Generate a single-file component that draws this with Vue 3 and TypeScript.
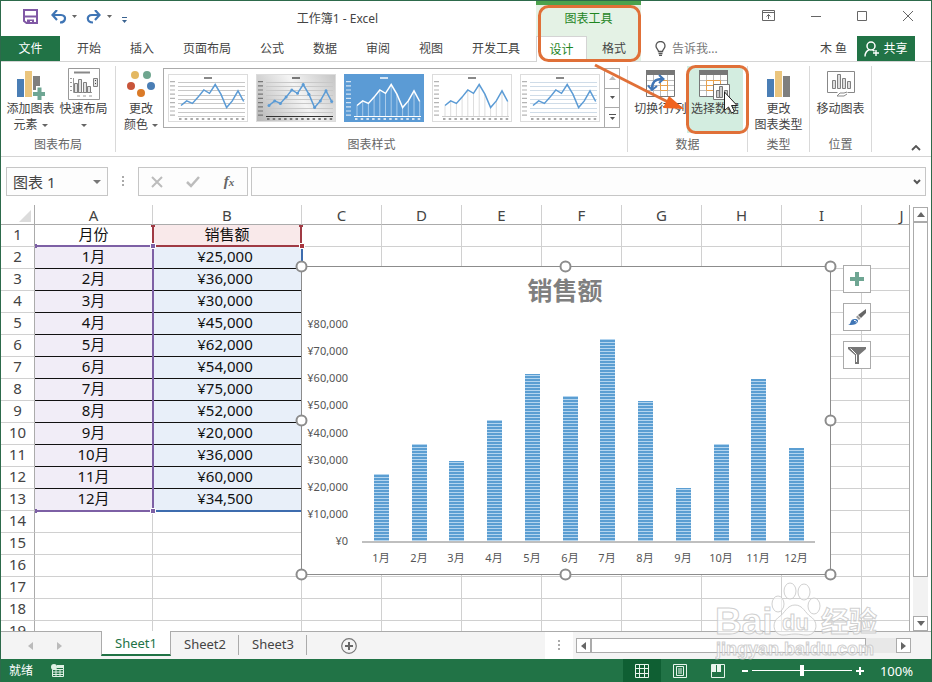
<script setup lang="ts">
import { ref } from 'vue'

interface MonthRow {
  month: string
  sales: number
}

const data: MonthRow[] = [
  25000, 36000, 30000, 45000, 62000, 54000, 75000, 52000, 20000, 36000, 60000, 34500,
].map((sales, i) => ({ month: `${i + 1}月`, sales }))

const money = (n: number): string => '¥' + n.toLocaleString('en-US')

const columns = ['A', 'B', 'C', 'D', 'E', 'F', 'G', 'H', 'I', 'J']
const emptyRows = [14, 15, 16, 17, 18, 19]
const extraColumns = 8

const mainTabs = ['开始', '插入', '页面布局', '公式', '数据', '审阅', '视图', '开发工具']
const sheets = ['Sheet1', 'Sheet2', 'Sheet3']
const activeSheet = ref('Sheet1')
const objectName = ref('图表 1')
const formula = ref('')
const zoomLevel = ref(50)

/* Chart geometry, in the coordinates of the chart's own view box */
const axisY = 276
const perUnit = 217 / 80000
const slot = 453 / 12
const bars = data.map((d, i) => {
  const height = Math.round(d.sales * perUnit)
  return {
    label: d.month,
    x: Math.round(61 + slot * (i + 0.5) - 7),
    cx: Math.round(61 + slot * (i + 0.5)),
    y: axisY - height,
    height,
  }
})
const ticks = Array.from({ length: 9 }, (_, i) => ({
  text: money(i * 10000),
  y: Math.round(axisY + 3 - i * 10000 * perUnit),
}))

/* Gallery thumbnails */
const pointList = data.map((d, i) => ({ x: 13 + i * 5.7, y: 42 - d.sales * 0.00042 }))
const polyline = pointList.map((p) => `${p.x},${p.y}`).join(' ')
const gridYs = [8, 12, 16, 21, 25, 29, 34, 38]
const thumbs = [
  { kind: 'plain', title: '样式 1' },
  { kind: 'silver', title: '样式 2' },
  { kind: 'blue', title: '样式 3' },
  { kind: 'drops', title: '样式 4' },
  { kind: 'light', title: '样式 5' },
]
</script>

<template>
  <div class="window">
    <header class="header">
      <div class="title-row">
        <div class="quick">
          <button aria-label="保存" class="q-save">
            <svg width="15" height="15" viewBox="0 0 15 15"><path d="M1 1h13v13H3.500L1 12z" fill="none" stroke="#8058a5" stroke-width="2" /><path d="M2 7.500h11" stroke="#8058a5" stroke-width="2" /><path d="M4 15v-4.500h7V15H9v-3H7v3z" fill="#8058a5" /></svg>
          </button>
          <button aria-label="撤消" class="q-undo">
            <svg width="28" height="14" viewBox="0 0 28 14"><path d="M2 5h8c6 0 5 7.500-1 7.500" fill="none" stroke="#3f75b5" stroke-width="2.200" /><path d="M6 0L1.500 5L6 10" fill="none" stroke="#3f75b5" stroke-width="2.200" /><path d="M21 5h5l-2.500 3z" fill="#666" /></svg>
          </button>
          <button aria-label="恢复" class="q-redo">
            <svg width="28" height="14" viewBox="0 0 28 14"><path d="M13 5H6c-6 0-5.500 7.500 1 7.500" fill="none" stroke="#3f75b5" stroke-width="2.200" /><path d="M9 0l4.500 5L9 10" fill="none" stroke="#3f75b5" stroke-width="2.200" /><path d="M21 5h5l-2.500 3z" fill="#666" /></svg>
          </button>
          <button aria-label="自定义快速访问工具栏">
            <svg width="8" height="14" viewBox="0 0 8 14"><path d="M1 7.500h5" stroke="#3a6390" /><path d="M1 10h5l-2.500 3z" fill="#3a6390" /></svg>
          </button>
        </div>
        <h1 class="title">工作簿1 - Excel</h1>
      </div>
      <div class="context-title">图表工具</div>
      <div class="window-buttons">
        <button aria-label="功能区显示选项"><svg width="14" height="12" viewBox="0 0 14 12"><path d="M.5.500h12v10H.500zM.500 2.500h12M6.500 9V4.500M4.500 6.500l2-2 2 2" fill="none" stroke="#666" /></svg></button>
        <button aria-label="最小化"><svg width="12" height="12" viewBox="0 0 12 12"><path d="M1 6.500h10" stroke="#666" /></svg></button>
        <button aria-label="最大化"><svg width="12" height="12" viewBox="0 0 12 12"><path d="M1.500 1.500h9v9h-9z" fill="none" stroke="#666" /></svg></button>
        <button aria-label="关闭"><svg width="12" height="12" viewBox="0 0 12 12"><path d="M1 1l10 10M11 1L1 11" fill="none" stroke="#666" /></svg></button>
      </div>

      <nav class="tabs" aria-label="功能区">
        <button class="file">文件</button>
        <button v-for="t in mainTabs" :key="t" class="tab">{{ t }}</button>
      </nav>
      <div class="context-tabs">
        <button class="ctab current">设计</button>
        <button class="ctab">格式</button>
      </div>
      <div class="account">
        <button class="tell">
          <svg width="11" height="15" viewBox="0 0 11 15"><path d="M3.500 10.500c0-2-2.500-3-2.500-5.500a4.300 4.300 0 0 1 9 0c0 2.500-2.500 3.500-2.500 5.500z" fill="none" stroke="#555" stroke-width="1.300" /><path d="M3.500 12.500h4M4 14.300h3" stroke="#555" stroke-width="1.300" /></svg>
          告诉我...
        </button>
        <span class="user">木 鱼</span>
        <button class="share">
          <svg width="16" height="16" viewBox="0 0 16 16"><circle cx="7" cy="5" r="4" fill="none" stroke="#fff" stroke-width="1.500" /><path d="M1 15.500c0-4 2-6 4.500-7M8.500 9l2 1M12 9v6M9 12h6" fill="none" stroke="#fff" stroke-width="1.400" /></svg>
          共享
        </button>
      </div>
    </header>

    <section class="ribbon">
      <div class="group g-layout">
        <div class="tools">
          <button class="tool">
            <svg width="30" height="32" viewBox="0 0 30 32"><path d="M1 11h7v18H1z" fill="#4a7eb5" /><path d="M9 3h7v26H9z" fill="#eac57e" /><path d="M17 8h7v21h-7z" fill="#7f7f7f" /><path d="M16 22h4v-4h8v4h3v8h-3v4h-8v-4h-4z" fill="#fff" /><path d="M17 24h4.500v-4.500h4V24H29v4h-3.500v4h-4v-4H17z" fill="#6fa693" /></svg>
            <span>添加图表</span><span>元素 <i class="caret"></i></span>
          </button>
          <button class="tool">
            <svg width="32" height="32" viewBox="0 0 32 32"><path d="M.5.500h31v31H.500z" fill="#fff" stroke="#999" /><path d="M6 4.500h16" stroke="#888" stroke-width="2" /><path d="M2 10.500h2m-2 4h2m-2 4h2m-2 4h2M5.500 10v14.500H24M9 28h3m3 0h3m3 0h3" stroke="#999" fill="none" /><path d="M6.500 15.500h3v9h-3zM10.500 11.500h3v13h-3zM15.500 14.500h3v10h-3zM19.500 18.500h3v6h-3zM25.500 10.500h4v8h-4z" fill="#e4e4e4" stroke="#808080" /><path d="M27 12h1v1h-1zM27 15h1v1h-1z" fill="#444" /></svg>
            <span>快速布局</span><span><i class="caret"></i></span>
          </button>
        </div>
        <div class="group-name">图表布局</div>
      </div>

      <div class="group g-style">
        <div class="tools">
          <button class="tool">
            <svg width="30" height="32" viewBox="0 0 30 32"><circle cx="9" cy="7" r="4" fill="#e3b862" /><circle cx="21" cy="7" r="4" fill="#6fa68f" /><circle cx="5" cy="18" r="4" fill="#c8553a" /><circle cx="25" cy="18" r="4" fill="#4a7eb5" /><circle cx="15" cy="25" r="4" fill="#da7a27" /></svg>
            <span>更改</span><span>颜色 <i class="caret"></i></span>
          </button>
          <div class="gallery">
            <button v-for="t in thumbs" :key="t.kind" class="thumb" :class="t.kind" :aria-label="t.title">
              <svg width="80" height="48" viewBox="0 0 80 48">
                <g v-if="t.kind !== 'blue' && t.kind !== 'drops'" class="lines">
                  <path v-for="y in gridYs" :key="y" :d="`M10 ${y}.500H77`" />
                </g>
                <g v-if="t.kind === 'blue' || t.kind === 'drops'" class="stems">
                  <path v-for="p in pointList" :key="p.x" :d="`M${p.x} ${p.y}V42`" />
                </g>
                <path class="base" d="M10 42.500H77" />
                <path class="ticks-y" d="M4.500 7v36" />
                <path class="ticks-x" d="M11 45H77" />
                <path class="head" d="M36 4H44" />
                <polyline :points="polyline" class="series" />
                <g v-if="t.kind === 'silver'" class="dots"><circle v-for="p in pointList" :key="p.x" :cx="p.x" :cy="p.y" r="1.500" /></g>
              </svg>
            </button>
            <div class="gallery-nav">
              <button aria-label="上一行"><svg width="7" height="4" viewBox="0 0 7 4"><path d="M0 4h7L3.500 0z" fill="#bbb" /></svg></button>
              <button aria-label="下一行"><svg width="7" height="4" viewBox="0 0 7 4"><path d="M1 0h5L3.500 3z" fill="#555" /></svg></button>
              <button aria-label="其他"><svg width="7" height="7" viewBox="0 0 7 7"><path d="M0 .5h7" stroke="#555" /><path d="M1 3h5L3.500 6z" fill="#555" /></svg></button>
            </div>
          </div>
        </div>
        <div class="group-name">图表样式</div>
      </div>

      <div class="group g-data">
        <div class="tools">
          <button class="tool">
            <svg width="30" height="32" viewBox="0 0 30 32"><path d="M.5 3.500h28v25H.500z" fill="#fff" stroke="#777" /><path d="M0 2h29v5H0z" fill="#777" /><path d="M7.500 7v21M14.500 7v21M21.500 7v21M1 12.500h27M1 17.500h27M1 22.500h27" stroke="#bbb" fill="none" /><path d="M14.500 12.500h7v10h-7zM14.500 17.500h7" fill="none" stroke="#e8a04c" /><path d="M6 21C6 14 9 11 16 11" stroke="#3f75b5" stroke-width="2.500" fill="none" /><path d="M13 7l4.500 4-4.500 4M2 17.500l4 4.500 5-4" stroke="#3f75b5" stroke-width="2" fill="none" /></svg>
            <span>切换行/列</span>
          </button>
          <button class="tool chosen">
            <svg width="32" height="32" viewBox="0 0 32 32"><path d="M.5 3.500h28v25H.500z" fill="#fff" stroke="#777" /><path d="M0 2h29v5H0z" fill="#777" /><path d="M7.500 7v21M14.500 7v21M21.500 7v21M1 12.500h27M1 17.500h27M1 22.500h27" stroke="#bbb" fill="none" /><path d="M7.500 12.500h14v10h-14zM14.500 12.500v10M7.500 17.500h14" fill="none" stroke="#e8a04c" /><path d="M14.500 16.500h16v15h-16z" fill="#fff" stroke="#777" /><path d="M17.500 22.500h3v7h-3zM20.500 18.500h3v11h-3zM25.500 22.500h3v7h-3z" fill="#ccc" stroke="#777" /></svg>
            <span>选择数据</span>
          </button>
        </div>
        <div class="group-name">数据</div>
      </div>

      <div class="group g-type">
        <div class="tools">
          <button class="tool">
            <svg width="24" height="32" viewBox="0 0 24 32"><path d="M0 11h7v18H0z" fill="#4a7eb5" /><path d="M8 3h7v26H8z" fill="#eac57e" /><path d="M16 8h7v21h-7z" fill="#7f7f7f" /></svg>
            <span>更改</span><span>图表类型</span>
          </button>
        </div>
        <div class="group-name">类型</div>
      </div>

      <div class="group g-place">
        <div class="tools">
          <button class="tool">
            <svg width="28" height="32" viewBox="0 0 28 32"><path d="M10.500 24.500H.500v-21h27v21h-7" fill="none" stroke="#888" /><path d="M5.500 12.500h3v8h-3zM10.500 6.500h3v14h-3zM15.500 10.500h3v10h-3zM20.500 13.500h3v7h-3z" fill="#ddd" stroke="#808080" /><path d="M10 28l3-3h4l3-1M10 28h7l3-2" fill="none" stroke="#888" /></svg>
            <span>移动图表</span>
          </button>
        </div>
        <div class="group-name">位置</div>
      </div>
      <button class="collapse" aria-label="折叠功能区"><svg width="10" height="6" viewBox="0 0 10 6"><path d="M1 5l4-4 4 4" fill="none" stroke="#555" stroke-width="1.800" /></svg></button>
    </section>

    <section class="formula-row">
      <div class="name-box">
        <input v-model="objectName" aria-label="名称框" />
        <button aria-label="名称列表"><svg width="8" height="4" viewBox="0 0 8 4"><path d="M0 0h8L4 4z" fill="#777" /></svg></button>
      </div>
      <svg class="grip" width="2" height="11" viewBox="0 0 2 11"><path d="M0 0h2v2H0zM0 4h2v2H0zM0 8h2v2H0z" fill="#aaa" /></svg>
      <div class="fx-buttons">
        <button aria-label="取消"><svg width="12" height="12" viewBox="0 0 12 12"><path d="M1 1l10 10M11 1L1 11" stroke="#bcbcbc" stroke-width="2" /></svg></button>
        <button aria-label="输入"><svg width="14" height="12" viewBox="0 0 14 12"><path d="M1 6l4 4 8-9" fill="none" stroke="#bcbcbc" stroke-width="2.500" /></svg></button>
        <button class="fx" aria-label="插入函数"><em>f</em><sub>x</sub></button>
      </div>
      <div class="formula">
        <input v-model="formula" aria-label="编辑栏" />
        <button aria-label="展开编辑栏"><svg width="8" height="6" viewBox="0 0 8 6"><path d="M1 1l3 3 3-3" fill="none" stroke="#555" stroke-width="2" /></svg></button>
      </div>
    </section>

    <main class="work">
      <div class="sheet">
        <table>
          <colgroup>
            <col class="c-num" /><col class="c-a" /><col class="c-b" />
            <col v-for="n in extraColumns" :key="n" class="c-rest" />
          </colgroup>
          <thead>
            <tr>
              <th class="corner"><svg width="12" height="12" viewBox="0 0 12 12"><path d="M12 0v12H0z" fill="#dcdcdc" /></svg></th>
              <th v-for="c in columns" :key="c" scope="col">{{ c }}</th>
            </tr>
          </thead>
          <tbody>
            <tr>
              <th scope="row">1</th><td>月份</td><td class="series-name">销售额</td>
              <td v-for="n in extraColumns" :key="n"></td>
            </tr>
            <tr v-for="(d, i) in data" :key="d.month">
              <th scope="row">{{ i + 2 }}</th><td class="month">{{ d.month }}</td><td class="value">{{ money(d.sales) }}</td>
              <td v-for="n in extraColumns" :key="n"></td>
            </tr>
            <tr v-for="r in emptyRows" :key="r">
              <th scope="row">{{ r }}</th>
              <td v-for="n in extraColumns + 2" :key="n"></td>
            </tr>
          </tbody>
        </table>

        <svg class="ranges" width="310" height="320" viewBox="0 0 310 320">
          <g fill="none" stroke-width="2">
            <path d="M34 41H151M34 306H151M152 42V306" stroke="#7d60a5" />
            <path d="M152 306H300M301 42V306" stroke="#3d6cae" />
            <path d="M152 21V41H300V21" stroke="#a03a44" />
          </g>
          <g stroke="#fff">
            <path d="M149.500 38.500h5v5h-5zM149.500 303.500h5v5h-5z" fill="#7d60a5" />
            <path d="M298.500 38.500h5v5h-5z" fill="#a8363f" />
          </g>
          <path d="M150 20h4v2h-4zM298 20h4v2h-4z" fill="#a03a44" />
          <path d="M34 39h2v4h-2zM34 304h2v4h-2z" fill="#7d60a5" />
        </svg>

        <figure class="chart" aria-label="销售额">
          <svg width="530" height="309" viewBox="0 0 530 309">
            <defs>
              <pattern id="stripe" width="3" height="3" patternUnits="userSpaceOnUse">
                <rect width="3" height="3" fill="#5b9ed2" /><rect y="1" width="3" height="1" fill="#b4d5ef" />
              </pattern>
            </defs>
            <path d="M.5.500h529v308H.500z" fill="#fff" stroke="#8c8c8c" />
            <text class="chart-title" x="264" y="34">销售额</text>
            <text v-for="t in ticks" :key="t.text" class="axis-y" x="47" :y="t.y">{{ t.text }}</text>
            <g v-for="b in bars" :key="b.label">
              <rect :x="b.x" :y="b.y" width="15" :height="b.height" fill="url(#stripe)" shape-rendering="crispEdges" />
              <text class="axis-x" :x="b.cx" y="296">{{ b.label }}</text>
            </g>
            <path d="M61 276H514" stroke="#bfbfbf" stroke-width="2" />
            <g fill="#fff" stroke="#8c8c8c" stroke-width="2">
              <circle cx="0.5" cy="0.5" r="5" /><circle cx="264.5" cy="0.5" r="5" /><circle cx="529.5" cy="0.5" r="5" />
              <circle cx="0.5" cy="154.5" r="5" /><circle cx="529.5" cy="154.5" r="5" />
              <circle cx="0.5" cy="308.5" r="5" /><circle cx="264.5" cy="308.5" r="5" /><circle cx="529.5" cy="308.5" r="5" />
            </g>
          </svg>
          <div class="chart-buttons">
            <button aria-label="图表元素"><svg width="14" height="14" viewBox="0 0 14 14"><path d="M5 0h4v5h5v4H9v5H5V9H0V5h5z" fill="#6fa693" /></svg></button>
            <button aria-label="图表样式"><svg width="18" height="18" viewBox="0 0 18 18"><path d="M18 1v4l-5 5-3-3z" fill="#666" /><path d="M9.500 7.500l3 3-1.500 1.500-3-3z" fill="#999" /><path d="M0 17c4-1 1-6 7-6 3 0 4 2 2 4-2 2-5 2-9 2z" fill="#3f75b5" /><path d="M6 12.500c2-.500 3 1 2 2" stroke="#fff" fill="none" /></svg></button>
            <button aria-label="图表筛选器"><svg width="18" height="17" viewBox="0 0 18 17"><path d="M0 0h18v2l-7 6v9H7V8L0 2z" fill="#777" /><path d="M2.500 1.500l6 6V15" stroke="#fff" fill="none" /></svg></button>
          </div>
        </figure>
      </div>
      <div class="vscroll">
        <button aria-label="向上滚动"><svg width="8" height="5" viewBox="0 0 8 5"><path d="M0 5h8L4 0z" fill="#666" /></svg></button>
        <div class="vtrack"><div class="vthumb"></div></div>
        <button aria-label="向下滚动"><svg width="8" height="5" viewBox="0 0 8 5"><path d="M0 0h8L4 5z" fill="#666" /></svg></button>
      </div>
    </main>

    <section class="sheet-bar">
      <div class="sheet-nav">
        <button aria-label="上一个工作表"><svg width="5" height="8" viewBox="0 0 5 8"><path d="M5 0v8L0 4z" fill="#bbb" /></svg></button>
        <button aria-label="下一个工作表"><svg width="5" height="8" viewBox="0 0 5 8"><path d="M0 0v8l5-4z" fill="#bbb" /></svg></button>
      </div>
      <button v-for="s in sheets" :key="s" class="sheet-tab" :class="{ open: s === activeSheet }" @click="activeSheet = s">{{ s }}</button>
      <button class="add" aria-label="新工作表"><svg width="16" height="16" viewBox="0 0 16 16"><circle cx="8" cy="8" r="7.300" fill="none" stroke="#777" stroke-width="1.200" /><path d="M8 4v8M4 8h8" stroke="#666" stroke-width="2" /></svg></button>
      <div class="split"><svg width="2" height="11" viewBox="0 0 2 11"><path d="M0 0h2v2H0zM0 4h2v2H0zM0 8h2v2H0z" fill="#aaa" /></svg></div>
      <div class="hscroll">
        <button aria-label="向左滚动"><svg width="5" height="8" viewBox="0 0 5 8"><path d="M5 0v8L0 4z" fill="#666" /></svg></button>
        <div class="htrack"><div class="hthumb"></div></div>
        <button aria-label="向右滚动"><svg width="5" height="8" viewBox="0 0 5 8"><path d="M0 0v8l5-4z" fill="#666" /></svg></button>
      </div>
    </section>

    <footer class="status">
      <span>就绪</span>
      <button class="macro" aria-label="录制宏"><svg width="14" height="14" viewBox="0 0 14 14"><path d="M1.500 5.500h11v7h-11zM1.500 2.500h11v3M5 5v8M9 5v8M1.500 8h11M1.500 10.500h11" fill="none" stroke="#dff0e5" /><path d="M6 1h7v3H6z" fill="#dff0e5" /><circle cx="3" cy="3" r="3" fill="#dff0e5" /></svg></button>
      <div class="views">
        <button class="on" aria-label="普通"><svg width="14" height="14" viewBox="0 0 14 14"><path d="M.5.500h13v13H.500zM4.500 0v14M9.500 0v14M0 4.500h14M0 9.500h14" fill="none" stroke="#e8f5ec" /></svg></button>
        <button aria-label="页面布局"><svg width="14" height="14" viewBox="0 0 14 14"><path d="M.5.500h13v13H.500zM3.500 2.500h7v9h-7zM5 5h4M5 7h4M5 9h4" fill="none" stroke="#e8f5ec" /></svg></button>
        <button aria-label="分页预览"><svg width="14" height="14" viewBox="0 0 14 14"><path d="M.5.500h13v13H.500z" fill="none" stroke="#e8f5ec" /><path d="M1 1h4v7H1zM6 1h4v7H6z" fill="#e8f5ec" /></svg></button>
      </div>
      <div class="zoom">
        <button aria-label="缩小"><svg width="6" height="6" viewBox="0 0 6 6"><path d="M0 3h6" stroke="#fff" stroke-width="2" /></svg></button>
        <input v-model="zoomLevel" type="range" min="0" max="100" aria-label="显示比例" />
        <button aria-label="放大"><svg width="8" height="8" viewBox="0 0 8 8"><path d="M0 4h8M4 0v8" stroke="#fff" stroke-width="2" /></svg></button>
      </div>
      <span class="percent">100%</span>
    </footer>

    <svg class="callouts" width="760" height="140" viewBox="0 0 760 140" aria-hidden="true">
      <g fill="none" stroke="#e07038" stroke-width="3">
        <rect x="539.500" y="6.500" width="100" height="54" rx="9" />
        <rect x="687.500" y="66.500" width="60" height="66" rx="8" />
        <path d="M595 65L668 102" />
      </g>
      <path d="M684 109l-21-1 6-12z" fill="#f0641e" />
      <path d="M724.500 92v18.500l4-3.500 3 6 3-1.500-3-6h5.500z" fill="#fff" stroke="#222" />
    </svg>

    <svg class="watermark" width="170" height="84" viewBox="0 0 170 84" aria-hidden="true">
      <g fill="#fff" fill-opacity=".6" stroke="#c4c4c4" stroke-opacity=".8">
        <ellipse cx="63" cy="25" rx="6" ry="8" /><ellipse cx="75" cy="12" rx="6" ry="8" />
        <ellipse cx="89" cy="13" rx="6" ry="8" /><ellipse cx="99" cy="27" rx="6" ry="8" />
        <path d="M80 26c8 0 10 8 16 12 8 5 6 18-4 18-5 0-7-1-12-1s-7 1-12 1c-10 0-12-13-4-18 6-4 8-12 16-12z" />
        <text class="wm-big" x="0" y="55">Bai</text>
        <text class="wm-du" x="67" y="51">du</text>
        <text class="wm-cn" x="106" y="53">经验</text>
        <text class="wm-url" x="1" y="76">jingyan.baidu.com</text>
      </g>
    </svg>
  </div>
</template>

<style>
body {
  margin: 0;
}
</style>

<style scoped>
.window {
  position: relative;
  display: flex;
  flex-direction: column;
  box-sizing: border-box;
  height: 100vh;
  border: 1px solid #2d6a4b;
  border-bottom: 0;
  background: #fff;
  color: #444;
  font: 12px/16px "Noto Sans", "Noto Sans CJK SC", sans-serif;
  overflow: hidden;
}
button {
  display: flex;
  align-items: center;
  justify-content: center;
  margin: 0;
  padding: 0;
  border: 0;
  background: none;
  color: inherit;
  font: inherit;
  white-space: nowrap;
}
input {
  min-width: 0;
  border: 0;
  outline: 0;
  background: none;
  color: inherit;
  font: inherit;
}
svg {
  display: block;
  flex: none;
}

/* Title bar and tabs */
.header {
  display: grid;
  grid-template-columns: 535px 105px 1fr;
  grid-template-rows: 35px 25px;
  border-bottom: 1px solid #d4d4d4;
}
.title-row {
  display: flex;
  align-items: center;
}
.quick {
  display: flex;
  align-items: center;
  width: 138px;
  box-sizing: border-box;
  padding-left: 22px;
  padding-bottom: 4px;
}
.q-save {
  margin-right: 13px;
}
.q-undo,
.q-redo {
  margin-right: 7px;
}
.title {
  flex: 1;
  margin: 0;
  font-size: 12px;
  font-weight: 400;
  text-align: center;
}
.context-title {
  border-top: 4px solid #4ba24d;
  background: #e4f2e5;
  color: #1f861f;
  line-height: 28px;
  text-align: center;
}
.window-buttons {
  display: flex;
  justify-content: flex-end;
  align-items: center;
  gap: 34px;
  padding: 0 17px 5px 0;
}
.tabs {
  display: flex;
  gap: 1px;
}
.file {
  width: 59px;
  margin-right: 2px;
  background: #217346;
  color: #fff;
}
.tab {
  padding: 0 14px;
}
.context-tabs {
  display: flex;
  background: #e4f2e5;
}
.ctab {
  flex: 1;
}
.current {
  flex: none;
  width: 51px;
  height: 26px;
  box-sizing: border-box;
  border: 1px solid #d4d4d4;
  border-bottom: 0;
  background: #fff;
  color: #1f861f;
}
.account {
  display: flex;
  align-items: center;
  padding: 0 16px 0 14px;
}
.tell {
  gap: 6px;
  color: #777;
}
.user {
  margin-left: auto;
  margin-right: 10px;
}
.share {
  align-self: stretch;
  gap: 3px;
  width: 58px;
  background: #217346;
  color: #fff;
}

/* Ribbon */
.ribbon {
  display: flex;
  height: 94px;
  border-bottom: 1px solid #d4d4d4;
}
.group {
  display: flex;
  flex-direction: column;
  margin: 4px 0;
  box-sizing: border-box;
  border-right: 1px solid #d9d9d9;
}
.g-layout { width: 115px; }
.g-style { width: 512px; }
.g-data { width: 120px; }
.g-type { width: 62px; }
.g-place { width: 62px; }
.tools {
  display: flex;
  flex: 1;
}
.g-layout .tools,
.g-style .tools {
  padding-left: 3px;
}
.g-data .tools {
  padding-left: 6px;
}
.g-type .tools,
.g-place .tools {
  justify-content: center;
}
.tool {
  flex-direction: column;
  justify-content: flex-start;
  width: 53px;
  height: 67px;
  padding-top: 2px;
  line-height: 16px;
}
.tool svg {
  margin-bottom: 1px;
}
.tool span {
  display: flex;
  align-items: center;
  gap: 4px;
  height: 16px;
}
.g-style .tool {
  width: 44px;
}
.chosen {
  width: 56px;
  background: #d3ede0;
}
.caret {
  border: 3px solid transparent;
  border-top-color: #666;
  border-bottom: 0;
}
.group-name {
  color: #666;
  line-height: 14px;
  text-align: center;
}
.gallery {
  display: flex;
  box-sizing: border-box;
  height: 60px;
  margin-top: 2px;
  border: 1px solid #ababab;
}
.thumb {
  width: 88px;
}
.thumb svg {
  box-sizing: border-box;
  background: #fff;
  outline: 1px solid #dcdcdc;
  outline-offset: -1px;
}
.silver svg { background: linear-gradient(60deg, #b5b5b5, #f4f4f4 55%, #c4c4c4); }
.blue svg { background: #5b9bd5; outline-color: #5b9bd5; }
.series { fill: none; stroke: #5b9bd5; stroke-width: 1.5; }
.blue .series { stroke: #fff; }
.lines { stroke: #c8c8c8; }
.light .lines { stroke: #cfdce8; }
.stems { stroke: #ddd; }
.blue .stems { stroke: #a9cbea; }
.dots { fill: #5b9bd5; }
.base { stroke: #ccc; }
.silver .base { stroke: #333; }
.blue .base { stroke: #fff; }
.ticks-y { stroke: #b4b4b4; stroke-width: 5; stroke-dasharray: 1.2 3; }
.ticks-x { stroke: #aaa; stroke-width: 2; stroke-dasharray: 2.5 3.2; }
.head { stroke: #888; stroke-width: 2; }
.silver .ticks-y,
.silver .ticks-x,
.silver .head { stroke: #777; }
.blue .ticks-y,
.blue .ticks-x,
.blue .head { stroke: #d3e4f4; }
.gallery-nav {
  display: flex;
  flex-direction: column;
  width: 14px;
  border-left: 1px solid #ababab;
}
.gallery-nav button {
  flex: 1;
}
.gallery-nav button + button {
  border-top: 1px solid #ababab;
}
.collapse {
  align-self: flex-end;
  margin: 0 10px 5px auto;
}

/* Formula bar */
.formula-row {
  display: flex;
  align-items: center;
  height: 29px;
  padding: 10px 5px 9px;
}
.name-box,
.fx-buttons,
.formula {
  display: flex;
  box-sizing: border-box;
  height: 29px;
  border: 1px solid #c6c6c6;
  background: #fdfdfd;
}
.name-box {
  width: 102px;
  padding: 0 6px;
  font-size: 15px;
}
.name-box input {
  flex: 1;
  padding: 0;
}
.grip {
  margin: 0 14px;
}
.fx-buttons {
  width: 110px;
}
.fx-buttons button {
  flex: 1;
}
.fx {
  font: 700 15px "Liberation Serif", serif;
  color: #666;
}
.fx sub {
  font-size: 11px;
  font-style: italic;
}
.formula {
  flex: 1;
  margin-left: 3px;
  padding: 0 4px;
}
.formula input {
  flex: 1;
}

/* Worksheet */
.work {
  display: flex;
  flex: 1;
  min-height: 0;
  background: #fff;
}
.sheet {
  position: relative;
  flex: 1;
  overflow: hidden;
  border-right: 1px solid #ababab;
}
table {
  width: 941px;
  table-layout: fixed;
  border-collapse: separate;
  border-spacing: 0;
  color: #111;
  font-size: 15px;
  line-height: 19px;
}
.c-num { width: 34px; }
.c-a { width: 118px; }
.c-b { width: 149px; }
.c-rest { width: 80px; }
th,
td {
  box-sizing: border-box;
  height: 22px;
  padding: 0 0 2px;
  border-right: 1px solid #d0d0d0;
  border-bottom: 1px solid #d0d0d0;
  text-align: center;
}
th {
  color: #444;
  font-weight: 400;
}
thead th {
  height: 20px;
  padding: 1px 0 0;
  border-bottom-color: #ababab;
  line-height: 18px;
}
tbody th,
.corner {
  border-right-color: #ababab;
}
.corner svg {
  margin: 2px 3px 0 auto;
}
.series-name { background: #f9e9ea; }
.month { background: #f1edf7; }
.value { background: #e8eff9; padding-right: 4px; }
.month,
.value { border-bottom-color: #111; }
.ranges {
  position: absolute;
  top: 0;
  left: 0;
}
.chart {
  position: absolute;
  top: 61px;
  left: 300px;
  display: flex;
  gap: 12px;
  margin: 0;
}
.chart > svg {
  overflow: visible;
}
.chart-title {
  fill: #7f7f7f;
  font-size: 25px;
  font-weight: 700;
  text-anchor: middle;
}
.axis-y,
.axis-x {
  fill: #555;
  font-size: 11px;
}
.axis-y { text-anchor: end; }
.axis-x { text-anchor: middle; }
.chart-buttons {
  display: flex;
  flex-direction: column;
  gap: 10px;
  margin-top: -1px;
}
.chart-buttons button {
  box-sizing: border-box;
  width: 28px;
  height: 28px;
  border: 1px solid #ababab;
  background: #fff;
}
.vscroll {
  display: flex;
  flex-direction: column;
  width: 15px;
  padding: 2px 3px 0;
}
.vscroll button,
.hscroll button {
  box-sizing: border-box;
  flex: none;
  width: 15px;
  height: 15px;
  border: 1px solid #ababab;
  background: #fff;
}
.vtrack {
  flex: 1;
  background: #f2f2f2;
}
.vthumb {
  box-sizing: border-box;
  height: 90%;
  border: 1px solid #ababab;
  background: #fff;
}

/* Sheet tabs */
.sheet-bar {
  display: flex;
  height: 27px;
  border-top: 1px solid #ababab;
  background: #f4f4f4;
}
.sheet-nav {
  display: flex;
  justify-content: center;
  gap: 24px;
  width: 87px;
  padding-right: 13px;
}
.sheet-tab {
  width: 68px;
  height: 24px;
  font-size: 13px;
  background: linear-gradient(#ababab, #ababab) right 3px / 1px 20px no-repeat;
}
.sheet-tab.open {
  box-sizing: border-box;
  width: 70px;
  margin-top: -1px;
  height: 25px;
  border: 1px solid #ababab;
  border-top: 0;
  border-bottom: 2px solid #217346;
  background: #fff;
  color: #217346;
}
.add {
  margin-left: 34px;
}
.split {
  display: flex;
  align-items: center;
  justify-content: center;
  width: 28px;
  margin-left: auto;
  background: #fff;
}
.hscroll {
  display: flex;
  align-items: center;
  width: 36%;
  margin: 0 20px 0 3px;
}
.htrack {
  flex: 1;
  height: 15px;
  background: #e8e8e8;
}
.hthumb {
  box-sizing: border-box;
  width: 90%;
  height: 15px;
  border: 1px solid #ababab;
  background: #fff;
}

/* Status bar */
.status {
  display: flex;
  align-items: center;
  height: 23px;
  padding: 0 18px 0 8px;
  background: #217346;
  color: #fff;
}
.macro {
  margin-left: 18px;
}
.views {
  display: flex;
  align-self: stretch;
  margin-left: auto;
}
.views button {
  width: 38px;
}
.views .on {
  background: #0f5f33;
}
.zoom {
  display: flex;
  align-items: center;
  gap: 4px;
  margin: 0 16px 0 5px;
}
.zoom input {
  width: 100px;
  height: 11px;
  margin: 0;
  appearance: none;
  background: linear-gradient(#fff, #fff) center / 100% 1px no-repeat;
}
.zoom input::-webkit-slider-thumb {
  appearance: none;
  width: 4px;
  height: 11px;
  background: #fff;
}
.percent {
  font-size: 13px;
}

/* Layers above the window */
.callouts {
  position: absolute;
  top: -1px;
  left: -1px;
  pointer-events: none;
}
.watermark {
  position: absolute;
  right: 46px;
  bottom: 19px;
  pointer-events: none;
}
.wm-big { font: 700 37px "Liberation Sans", sans-serif; }
.wm-du { font: 700 22px "Liberation Sans", sans-serif; }
.wm-cn { font: 700 28px "Noto Sans CJK SC", sans-serif; }
.wm-url { font: 700 18px "Liberation Sans", sans-serif; }
</style>
